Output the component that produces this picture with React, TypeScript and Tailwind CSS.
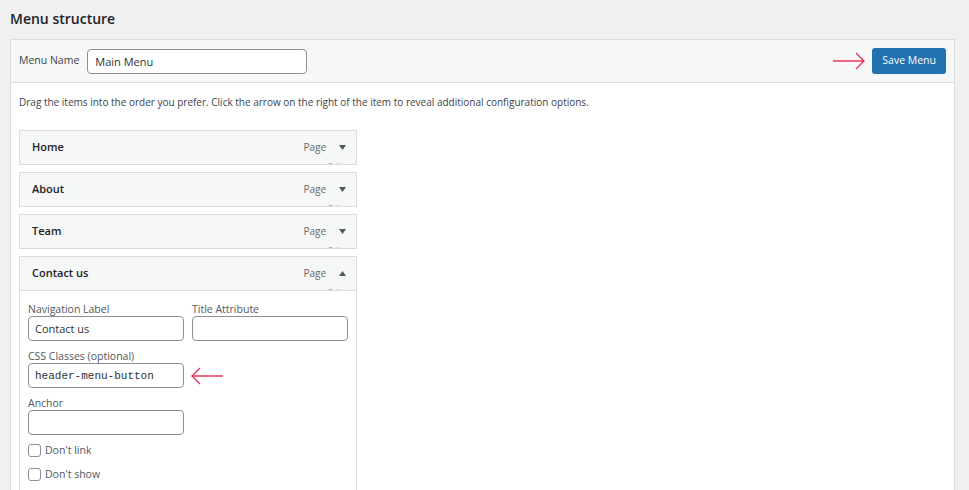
import { useState } from 'react';

const font = 'font-["Segoe_UI","Open_Sans",sans-serif]';

function Arrow({ dir }: { dir: 'left' | 'right' }) {
  // thin pink annotation arrow
  return (
    <svg width="34" height="20" viewBox="0 0 34 20" className="shrink-0">
      {dir === 'right' ? (
        <path d="M1 10 H32 M24 2 L32 10 L24 18" fill="none" stroke="#e8385c" strokeWidth="1.4" />
      ) : (
        <path d="M33 10 H2 M10 2 L2 10 L10 18" fill="none" stroke="#e8385c" strokeWidth="1.4" />
      )}
    </svg>
  );
}

function Triangle({ up }: { up?: boolean }) {
  return (
    <svg width="7" height="5" viewBox="0 0 7 5">
      <path d={up ? 'M0 5 L3.5 0 L7 5 Z' : 'M0 0 L7 0 L3.5 5 Z'} fill="#50575e" />
    </svg>
  );
}

function ItemBar({ title, open }: { title: string; open?: boolean }) {
  return (
    <div className="relative flex h-[33px] items-center overflow-hidden bg-[#f6f7f7] pl-[12px] pr-[10px]">
      <span className="text-[11px] font-semibold text-[#1d2327]">{title}</span>
      <span className="ml-auto text-[10px] text-[#646970]">Page</span>
      <span className="ml-[13px] flex w-[7px] items-center">
        <Triangle up={open} />
      </span>
      {/* "Edit" link peeking under the type label, mostly hidden */}
      <span className="absolute bottom-[-9px] right-[12px] text-[9px] text-[#a7aaad]">Edit</span>
    </div>
  );
}

function Field({ label, value, mono, width = 'w-[156px]' }: { label: string; value?: string; mono?: boolean; width?: string }) {
  return (
    <div className="flex flex-col">
      <label className="text-[10.5px] leading-[14px] text-[#50575e]">{label}</label>
      <input
        readOnly
        value={value ?? ''}
        className={`${width} h-[25px] rounded-[4px] border border-[#8c8f94] bg-white px-[6px] text-[11px] text-[#2c3338] outline-none ${mono ? 'font-["Liberation_Mono",monospace] text-[10.5px]' : ''}`}
      />
    </div>
  );
}

function Check({ label }: { label: string }) {
  const [on, setOn] = useState(false);
  return (
    <label className="flex items-center gap-[4px] text-[10.5px] text-[#50575e]">
      <span
        onClick={() => setOn(!on)}
        className="h-[13px] w-[13px] rounded-[3px] border border-[#8c8f94] bg-white"
      >
        {on && <span className="block h-full w-full rounded-[2px] bg-[#2271b1]" />}
      </span>
      {label}
    </label>
  );
}

export default function App() {
  const items = ['Home', 'About', 'Team'];

  return (
    <div className={`min-h-screen bg-[#f0f0f1] pl-[10px] pr-[14px] ${font}`}>
      <h2 className="flex h-[39px] items-center pb-[2px] text-[14px] font-semibold text-[#1d2327]">
        Menu structure
      </h2>

      <div className="border border-[#dcdcde] bg-white">
        {/* header: menu name + save */}
        <div className="flex h-[43px] items-center border-b border-[#dcdcde] bg-[#f6f7f7] px-[8px]">
          <span className="text-[10.5px] text-[#3c434a]">Menu Name</span>
          <input
            readOnly
            value="Main Menu"
            className="ml-[8px] h-[25px] w-[220px] rounded-[4px] border border-[#8c8f94] bg-white px-[7px] text-[11px] text-[#2c3338] outline-none"
          />
          <div className="ml-auto mr-[6px]">
            <Arrow dir="right" />
          </div>
          <button className="h-[26px] rounded-[3px] bg-[#2271b1] px-[10px] text-[10.5px] text-white">
            Save Menu
          </button>
        </div>

        <div className="px-[8px] pb-[20px] pt-[12px]">
          <p className="text-[10px] text-[#3c434a]">
            Drag the items into the order you prefer. Click the arrow on the right of the item to reveal additional configuration options.
          </p>

          <ul className="mt-[20px] flex w-[338px] flex-col gap-[7px]">
            {items.map((t) => (
              <li key={t} className="border border-[#dcdcde]">
                <ItemBar title={t} />
              </li>
            ))}
            <li className="border border-[#dcdcde]">
              <ItemBar title="Contact us" open />
              <div className="border-t border-[#dcdcde] bg-white px-[8px] pb-[20px] pt-[11px]">
                <div className="flex gap-[8px]">
                  <Field label="Navigation Label" value="Contact us" />
                  <Field label="Title Attribute" />
                </div>
                <div className="mt-[8px] flex items-end gap-[6px]">
                  <Field label="CSS Classes (optional)" value="header-menu-button" mono />
                  <div className="mb-[2px]">
                    <Arrow dir="left" />
                  </div>
                </div>
                <div className="mt-[8px]">
                  <Field label="Anchor" />
                </div>
                <div className="mt-[8px] flex flex-col gap-[8px]">
                  <Check label="Don't link" />
                  <Check label="Don't show" />
                </div>
              </div>
            </li>
          </ul>
        </div>
      </div>
    </div>
  );
}
